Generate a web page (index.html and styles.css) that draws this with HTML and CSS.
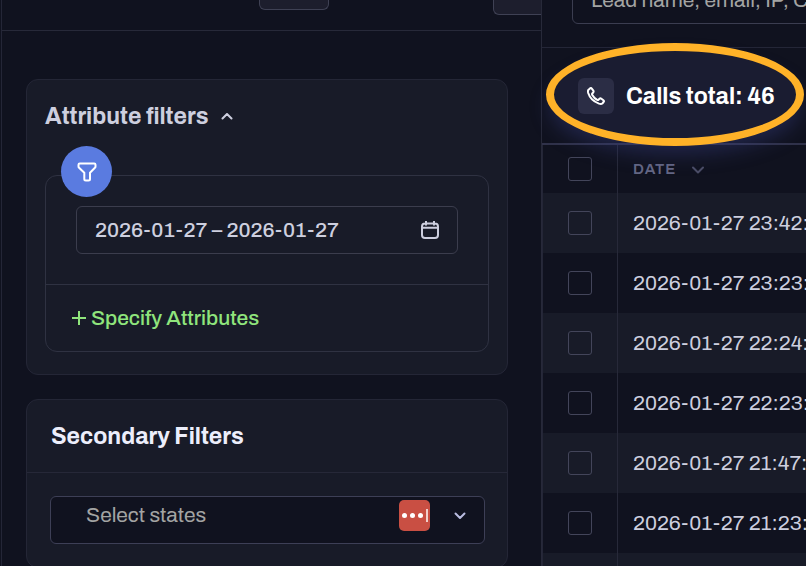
FILE: index.html
```html
<!DOCTYPE html>
<html lang="en">
<head>
    <meta charset="UTF-8">
    <meta name="viewport" content="width=device-width, initial-scale=1.0">
    <title>Calls</title>
    <link rel="stylesheet" href="styles.css">
</head>
<body>
    <aside class="sidebar">
        <div class="toolbar">
            <button class="tool-btn" type="button" aria-label="Reset"></button>
            <button class="tool-btn tool-btn-end" type="button" aria-label="Collapse"></button>
        </div>

        <div class="filters">
            <section class="card attributes">
                <button class="card-toggle" type="button">
                    Attribute filters
                    <svg width="12" height="8" viewBox="0 0 12 8"><path d="M1.500 5.500 6 1l4.500 4.500"/></svg>
                </button>
                <div class="group">
                    <span class="group-icon">
                        <svg width="20" height="20" viewBox="0 0 20 20"><path d="M2.800 1.500h14.400q1.300 0 1.300 1.300v1.600q0 .8-.6 1.400L13 10.800v6.200q0 1.500-1.500 1.500h-2.700q-1.500 0-1.500-1.500V10.800L2.100 5.800q-.6-.6-.6-1.400V2.800q0-1.300 1.300-1.300z"/></svg>
                    </span>
                    <div class="group-body">
                        <div class="date-field">
                            <input type="text" value="2026-01-27 – 2026-01-27" aria-label="Date range">
                            <svg width="18" height="18" viewBox="0 0 18 18"><path d="M4 2.500h10q3 0 3 3V14q0 3-3 3H4q-3 0-3-3V5.500q0-3 3-3zM1 6.800h16M5 .3v3.400M13 .3v3.400"/></svg>
                        </div>
                    </div>
                    <div class="group-foot">
                        <button class="add-btn" type="button">
                            <svg width="14" height="14" viewBox="0 0 14 14"><path d="M7 0v14M0 7h14"/></svg>
                            Specify Attributes
                        </button>
                    </div>
                </div>
            </section>

            <section class="card">
                <h2>Secondary Filters</h2>
                <div class="card-body">
                    <div class="select-field">
                        <select aria-label="States">
                            <option>Select states</option>
                        </select>
                        <span class="badge"><i></i><i></i><i></i><b></b></span>
                        <svg class="arrow" width="12" height="8" viewBox="0 0 12 8"><path d="M1.500 1.500 6 6l4.500-4.500"/></svg>
                    </div>
                </div>
            </section>
        </div>
    </aside>

    <main class="content">
        <div class="search">
            <input type="text" placeholder="Lead name, email, IP, Country" aria-label="Search">
        </div>

        <div class="total">
            <div class="highlight"></div>
            <span class="total-icon">
                <svg width="18" height="18" viewBox="0 0 18 18"><path d="M1.500 2.700 3 1.400q1-.8 1.800.2l1.500 2q.7 1-.1 1.900l-.9 1q-.5.600 0 1.400 1.800 3.200 4.900 4.900.8.400 1.300-.1l1-.9q.9-.8 1.900-.1l2 1.500q1 .8.200 1.800l-1.300 1.500q-1 .8-3.300.1Q3.600 13.600 1.200 6 .6 3.700 1.500 2.700z"/></svg>
            </span>
            <h1>Calls total: 46</h1>
        </div>

        <table class="calls">
            <thead>
                <tr>
                    <th class="check"><input type="checkbox" aria-label="Select all"></th>
                    <th>DATE <svg width="12" height="8" viewBox="0 0 12 8"><path d="M1 1.500l5 5 5-5"/></svg></th>
                </tr>
            </thead>
            <tbody>
                <tr><td class="check"><input type="checkbox" aria-label="Select call"></td><td>2026-01-27 23:42:</td></tr>
                <tr><td class="check"><input type="checkbox" aria-label="Select call"></td><td>2026-01-27 23:23:</td></tr>
                <tr><td class="check"><input type="checkbox" aria-label="Select call"></td><td>2026-01-27 22:24:</td></tr>
                <tr><td class="check"><input type="checkbox" aria-label="Select call"></td><td>2026-01-27 22:23:</td></tr>
                <tr><td class="check"><input type="checkbox" aria-label="Select call"></td><td>2026-01-27 21:47:</td></tr>
                <tr><td class="check"><input type="checkbox" aria-label="Select call"></td><td>2026-01-27 21:23:</td></tr>
                <tr><td class="check"></td><td></td></tr>
            </tbody>
        </table>
    </main>
</body>
</html>
```
FILE: styles.css
```css
* {
    box-sizing: border-box;
}

body {
    margin: 0;
    display: flex;
    height: 100vh;
    overflow: hidden;
    background-color: #10121f;
    color: #cdcfdf;
    font-family: Archivo, "Liberation Sans", Arial, sans-serif;
    font-size: 21px;
    font-weight: 500;
    line-height: 24px;
}

button,
input,
select {
    font: inherit;
    color: inherit;
    margin: 0;
}

svg {
    display: block;
    fill: none;
    stroke: currentColor;
    stroke-width: 2;
    stroke-linecap: round;
    stroke-linejoin: round;
}

/* Sidebar */

.sidebar {
    flex: 0 0 540px;
    margin-left: 1px;
    border-left: 1px solid #242637;
}

.toolbar {
    display: flex;
    justify-content: flex-end;
    align-items: flex-start;
    gap: 164px;
    height: 31px;
    border-bottom: 1px solid #272939;
}

.tool-btn {
    width: 70px;
    height: 10px;
    padding: 0;
    background-color: #1d1e2d;
    border: 1px solid #3f4154;
    border-top: 0;
    border-radius: 0 0 6px 6px;
}

.tool-btn-end {
    width: 48px;
    height: 15px;
    border-right: 0;
    border-radius: 0 0 0 6px;
}

.filters {
    display: flex;
    flex-direction: column;
    gap: 24px;
    padding: 48px 33px 0 24px;
}

.card {
    background-color: #181b28;
    border: 1px solid #242636;
    border-radius: 12px;
}

.attributes {
    padding: 23px 18px 22px;
}

.card-toggle {
    display: flex;
    align-items: center;
    gap: 13px;
    height: 28px;
    margin-bottom: 44px;
    padding: 0;
    background: none;
    border: none;
    color: #cdcfdf;
    font-size: 23px;
    font-weight: bold;
}

.group {
    position: relative;
    border: 1px solid #2f3242;
    border-radius: 12px;
}

.group-icon {
    position: absolute;
    top: -30px;
    left: 15px;
    display: flex;
    align-items: center;
    justify-content: center;
    width: 51px;
    height: 51px;
    border-radius: 50%;
    background-color: #5a7be0;
    color: #fff;
}

.group-body {
    padding: 30px;
}

.date-field,
.select-field {
    position: relative;
}

.date-field input {
    display: block;
    width: 100%;
    height: 48px;
    padding: 0 48px 0 18px;
    background: none;
    border: 1px solid #3b3d4d;
    border-radius: 6px;
}

.date-field svg {
    position: absolute;
    right: 19px;
    top: 15px;
}

.group-foot {
    padding: 21px 26px;
    border-top: 1px solid #2f3242;
}

.add-btn {
    display: flex;
    align-items: center;
    gap: 5px;
    padding: 0;
    background: none;
    border: none;
    color: #8fe57c;
}

.card h2 {
    margin: 0;
    padding: 25px 24px 23px;
    border-bottom: 1px solid #262838;
    color: #eceefb;
    font-size: 23px;
    line-height: 24px;
}

.card-body {
    padding: 23px 22px 23px 23px;
}

.select-field select {
    appearance: none;
    display: block;
    width: 100%;
    height: 48px;
    padding: 0 96px 10px 35px;
    background-color: #10121f;
    border: 1px solid #3d3f56;
    border-radius: 6px;
    color: #a3a4a3;
    font-weight: 400;
}

.badge {
    position: absolute;
    right: 55px;
    top: 4px;
    display: flex;
    align-items: center;
    justify-content: center;
    gap: 3px;
    width: 31px;
    height: 31px;
    border-radius: 5px;
    background-color: #c94f43;
}

.badge i {
    width: 5px;
    height: 5px;
    border-radius: 50%;
    background-color: #fff;
}

.badge b {
    width: 2px;
    height: 13px;
    background-color: #f1cfcb;
}

.select-field .arrow {
    position: absolute;
    right: 19px;
    top: 16px;
    color: #b9bce0;
}

/* Calls list */

.content {
    flex: 1;
    min-width: 0;
    border-left: 1px solid #272939;
}

.search {
    height: 48px;
    padding-left: 30px;
    overflow: hidden;
    border-bottom: 1px solid #242637;
}

.search input {
    display: block;
    width: 400px;
    height: 48px;
    margin-top: -24px;
    padding: 0 18px;
    background: none;
    border: 1px solid #3b3d50;
    border-radius: 6px;
    font-weight: 400;
}

.search input::placeholder {
    color: #a3a4a3;
}

.total {
    position: relative;
    display: flex;
    align-items: center;
    gap: 12px;
    height: 97px;
    padding-left: 36px;
    border-bottom: 2px solid #30324a;
}

.highlight {
    position: absolute;
    z-index: 1;
    top: -5px;
    left: 4px;
    width: 258px;
    height: 103px;
    border: 8px solid #ffb228;
    border-radius: 50%;
    background-color: #1a1c31;
    box-shadow: 0 12px 20px -4px rgba(60, 68, 140, 0.4);
}

.total-icon {
    position: relative;
    z-index: 2;
    display: flex;
    align-items: center;
    justify-content: center;
    width: 36px;
    height: 36px;
    border-radius: 6px;
    background-color: #2b2d45;
    color: #fff;
}

.total h1 {
    position: relative;
    z-index: 2;
    margin: 0;
    padding-top: 2px;
    color: #fff;
    font-size: 23px;
    white-space: nowrap;
}

.calls {
    width: 100%;
    table-layout: fixed;
    border-collapse: separate;
    border-spacing: 0;
    border-left: 1px solid #242637;
}

.calls th,
.calls td {
    height: 60px;
    padding: 0 0 0 15px;
    font-weight: 400;
    text-align: left;
    white-space: nowrap;
}

.calls th {
    height: 48px;
    color: #646784;
    font-size: 15px;
    font-weight: 600;
    letter-spacing: 1px;
}

.calls th svg {
    display: inline-block;
    margin-left: 12px;
    color: #4b4d66;
}

.calls .check {
    width: 75px;
    padding: 0 0 0 25px;
    border-right: 1px solid #272939;
}

.calls tbody tr:nth-child(odd) {
    background-color: #181b28;
}

.calls input {
    appearance: none;
    display: block;
    width: 24px;
    height: 24px;
    border: 1px solid #43455a;
    border-radius: 3px;
}
```
